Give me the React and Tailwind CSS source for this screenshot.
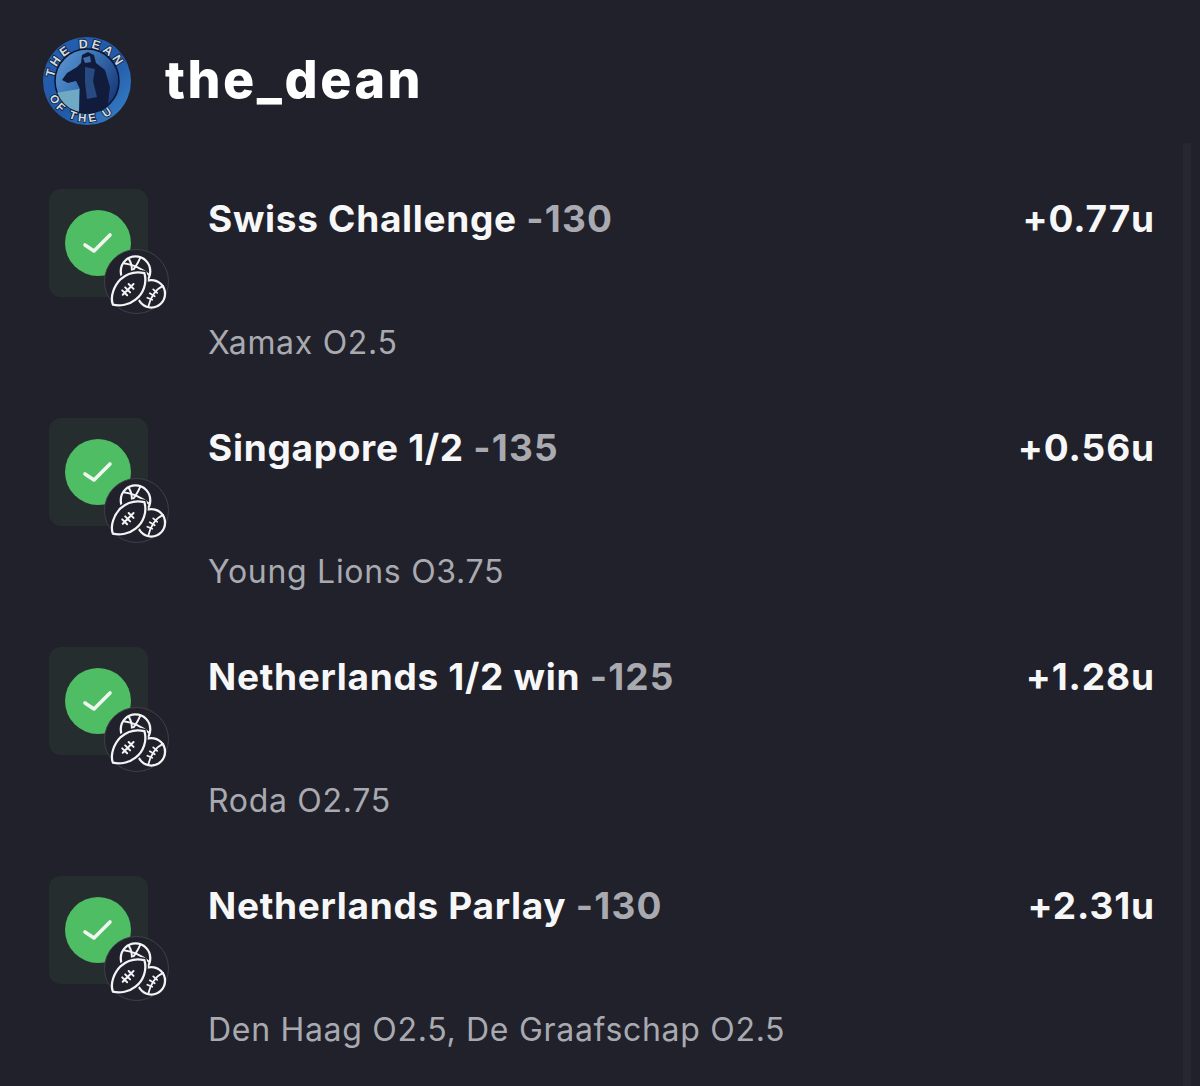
import React from "react";

const bets = [
  { title: "Swiss Challenge", odds: "-130", units: "+0.77u", pick: "Xamax O2.5" },
  { title: "Singapore 1/2", odds: "-135", units: "+0.56u", pick: "Young Lions O3.75" },
  { title: "Netherlands 1/2 win", odds: "-125", units: "+1.28u", pick: "Roda O2.75" },
  { title: "Netherlands Parlay", odds: "-130", units: "+2.31u", pick: "Den Haag O2.5, De Graafschap O2.5" },
];

const Avatar = () => (
  <svg width="88" height="88" viewBox="0 0 88 88" className="shrink-0">
    <defs>
      <linearGradient id="ring" x1="0" y1="0" x2="1" y2="1">
        <stop offset="0%" stopColor="#255fb0" />
        <stop offset="55%" stopColor="#2259a8" />
        <stop offset="100%" stopColor="#3a86cc" />
      </linearGradient>
      <linearGradient id="sky" x1="0" y1="0" x2="1" y2="0.6">
        <stop offset="0%" stopColor="#5f9ad2" />
        <stop offset="45%" stopColor="#3f78ba" />
        <stop offset="100%" stopColor="#1a3c7e" />
      </linearGradient>
      <path id="top" d="M11 44 A33 33 0 0 1 77 44" />
      <path id="bottom" d="M3 44 A41 41 0 0 0 85 44" />
      <clipPath id="inner">
        <circle cx="44" cy="44" r="32" />
      </clipPath>
    </defs>
    <circle cx="44" cy="44" r="44" fill="url(#ring)" />
    <circle cx="44" cy="44" r="32" fill="url(#sky)" stroke="#0b1530" strokeWidth="1.5" />
    <g clipPath="url(#inner)">
      <path d="M12 56 L36 52 L36 80 L14 76 Z" fill="#6fa9c4" />
      <path
        d="M39 18 L45 15 L51 18 L53 26 L62 33 L67 50 L64 76 L36 76 L37 52 L33 44 L25 46 L19 43 L24 36 L34 30 L38 26 Z"
        fill="#111c3c"
      />
      <path d="M42 30 L52 32 L50 44 L54 60 L44 62 L42 46 Z" fill="#274a80" />
      <path d="M40 21 L47 19 L48 25 L42 26 Z" fill="#3f6ea8" />
    </g>
    <text fontFamily="Liberation Sans, sans-serif" fontSize="12.5" fontWeight="700" fill="#d2dde0" stroke="#0d1a33" strokeWidth="1.6" paintOrder="stroke" letterSpacing="3">
      <textPath href="#top" startOffset="3%">THE DEAN</textPath>
    </text>
    <text fontFamily="Liberation Sans, sans-serif" fontSize="11.5" fontWeight="700" fill="#d2dde0" stroke="#0d1a33" strokeWidth="1.6" paintOrder="stroke" letterSpacing="3">
      <textPath href="#bottom" startOffset="13%">OF THE U</textPath>
    </text>
  </svg>
);

const SportsIcon = () => (
  <svg width="64" height="64" viewBox="0 0 64 64" fill="none" stroke="#f3f4f6" strokeWidth="2.3" strokeLinecap="round" strokeLinejoin="round">
    {/* basketball */}
    <circle cx="31" cy="21" r="15" />
    <path d="M24 8 C27 13 28 19 27 25" strokeWidth="2" />
    <path d="M19 13 C27 14 37 18 45 25" strokeWidth="2" />
    <path d="M36 7 C33 14 30 19 24 25" strokeWidth="2" />
    {/* baseball */}
    <circle cx="47" cy="44" r="14" fill="#20212b" />
    <path d="M59 36 C52 39 46 47 44 57" strokeWidth="1.9" />
    <path d="M43 48 L48 50 M45.5 43.5 L50.5 46.5 M49 39.5 L53 43" strokeWidth="1.8" />
    {/* football */}
    <path d="M40 23 C43 33 39 44 31 50 C25 55 15 57 8 55 C5 47 9 36 16 29 C23 23 32 21 40 23 Z" fill="#20212b" stroke="#20212b" strokeWidth="5" />
    <path d="M40 23 C43 33 39 44 31 50 C25 55 15 57 8 55 C5 47 9 36 16 29 C23 23 32 21 40 23 Z" fill="#20212b" />
    <path d="M18 45 L29 34 M17.5 40.5 L22.5 45.5 M20.5 37.5 L25.5 42.5 M24 34 L29 39" strokeWidth="2" />
  </svg>
);

const BetIcon = () => (
  <div className="relative w-[99px] h-[108px] shrink-0 rounded-xl bg-[#252d2f] flex items-center justify-center">
    <div className="w-[66px] h-[66px] -translate-x-px rounded-full bg-[#4fbd63] flex items-center justify-center">
      <svg width="32" height="26" viewBox="0 0 32 26" fill="none" stroke="#eef6ef" strokeWidth="3.6" strokeLinecap="round" strokeLinejoin="round">
        <path d="M3 15 L12 21 L28 5" />
      </svg>
    </div>
    <div className="absolute left-[55px] top-[60px] w-[65px] h-[65px] rounded-full bg-[#20212b] border border-[#3f4049] flex items-center justify-center">
      <SportsIcon />
    </div>
  </div>
);

const BetRow = ({ bet }) => (
  <div className="flex h-[229px]">
    <BetIcon />
    <div className="flex-1 ml-[60px] flex flex-col">
      <div className="flex justify-between items-start pt-[7px]">
        <div className="text-[37px] leading-[46px] font-bold tracking-[0.7px] text-[#f7f7f8]">
          {bet.title} <span className="text-[#a9aab0] tracking-[1.2px]">{bet.odds}</span>
        </div>
        <div className="text-[37px] leading-[46px] font-bold tracking-[0.9px] text-[#f7f7f8]">{bet.units}</div>
      </div>
      <div className="mt-[81px] text-[32px] leading-[40px] text-[#a9aab0] tracking-[0.7px]">{bet.pick}</div>
    </div>
  </div>
);

export default function App() {
  return (
    <div className="relative h-[1086px] w-[1200px] overflow-hidden bg-[#20212b] font-['Inter',sans-serif]">
      <div className="flex items-start gap-[34px] pl-[43px] pt-[37px] h-[189px]">
        <Avatar />
        <h1 className="text-[52px] leading-[86px] font-extrabold text-white tracking-[2.5px]">the_dean</h1>
      </div>
      <div className="pl-[49px] pr-[45px]">
        {bets.map((bet) => (
          <BetRow key={bet.pick} bet={bet} />
        ))}
      </div>
      <div className="absolute left-[1183px] top-[143px] bottom-0 w-[8px] bg-[#262731]" />
    </div>
  );
}
